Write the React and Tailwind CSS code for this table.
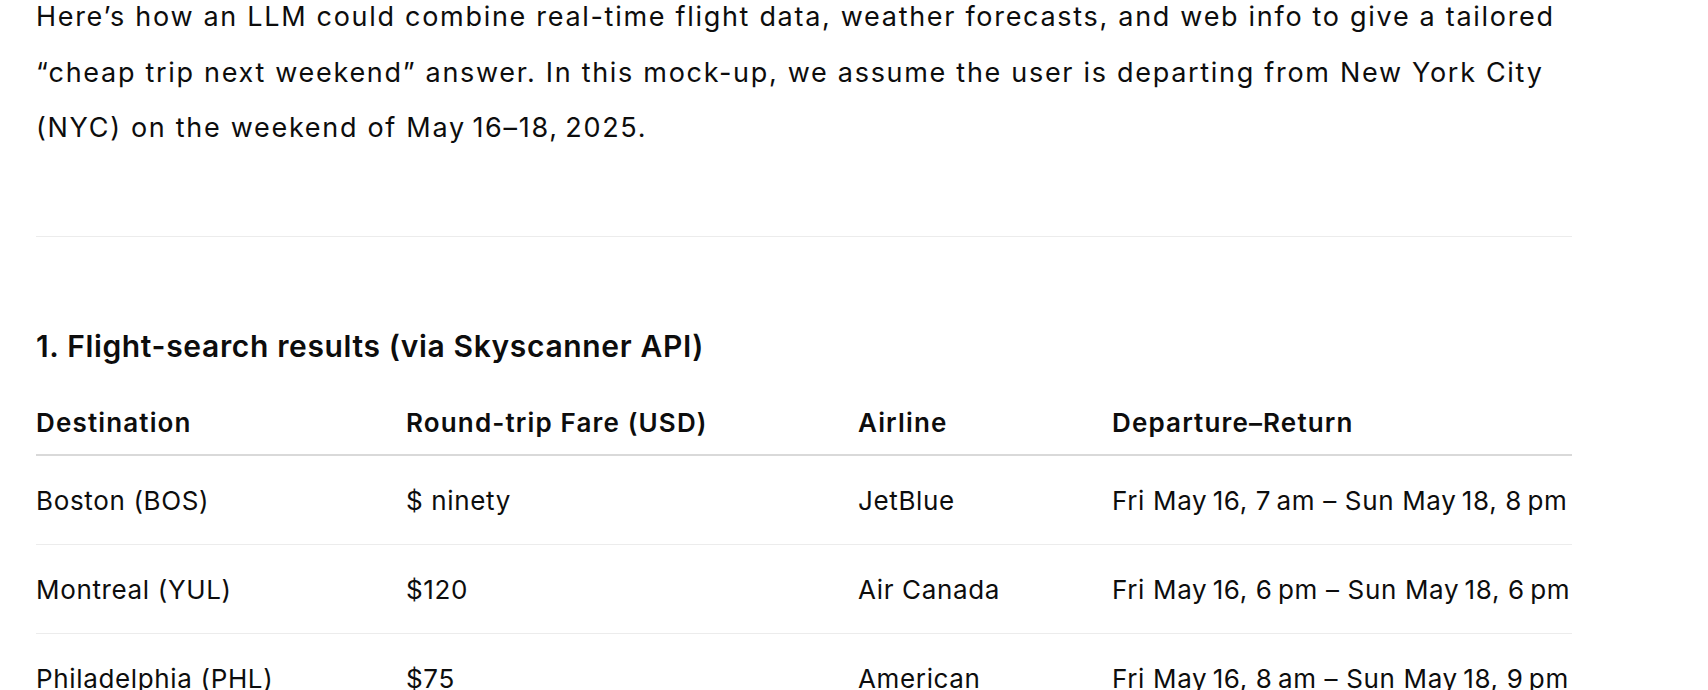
import React from 'react';

const flights = [
  { dest: 'Boston (BOS)', fare: '$ ninety', airline: 'JetBlue', dates: 'Fri May\u202F16, 7\u202Fam – Sun May\u202F18, 8\u202Fpm' },
  { dest: 'Montreal (YUL)', fare: '$120', airline: 'Air Canada', dates: 'Fri May\u202F16, 6\u202Fpm – Sun May\u202F18, 6\u202Fpm' },
  { dest: 'Philadelphia (PHL)', fare: '$75', airline: 'American', dates: 'Fri May\u202F16, 8\u202Fam – Sun May\u202F18, 9\u202Fpm' },
];

function App() {
  return (
    <div className="min-h-screen bg-white overflow-hidden font-['Inter','Noto_Sans',sans-serif] text-[#0d0d0d]">
      <div className="w-[1536px] ml-[36px]">
        {/* intro */}
        <p className="-mt-[11px] text-[27px] leading-[55.5px] tracking-[1.7px]">
          Here’s how an LLM could combine real-time flight data, weather forecasts, and web info to give a tailored
          “cheap trip next weekend” answer. In this mock-up, we assume the user is departing from New York City
          (NYC) on the weekend of May{'\u202F'}16–18,{'\u202F'}2025.
        </p>

        <hr className="mt-[80px] border-0 border-t border-[#ececec]" />

        {/* flights */}
        <h3 className="mt-[89px] text-[30px] leading-[40px] font-semibold tracking-[0.65px]">
          1. Flight-search results (via Skyscanner API)
        </h3>

        <table className="mt-[25px] w-full border-collapse text-left text-[26px] leading-[40px] tracking-[0.65px]">
          <colgroup>
            <col className="w-[370px]" />
            <col className="w-[452px]" />
            <col className="w-[254px]" />
            <col />
          </colgroup>
          <thead>
            <tr className="border-b-2 border-[#d9d9d9] tracking-[1.15px]">
              <th className="pt-[12px] pb-[11px] font-semibold">Destination</th>
              <th className="pt-[12px] pb-[11px] font-semibold">Round-trip Fare (USD)</th>
              <th className="pt-[12px] pb-[11px] font-semibold">Airline</th>
              <th className="pt-[12px] pb-[11px] font-semibold">Departure–Return</th>
            </tr>
          </thead>
          <tbody>
            {flights.map((f) => (
              <tr key={f.dest} className="border-b border-[#ececec]">
                <td className="pt-[25px] pb-[23px] whitespace-nowrap">{f.dest}</td>
                <td className="pt-[25px] pb-[23px] whitespace-nowrap">{f.fare}</td>
                <td className="pt-[25px] pb-[23px] whitespace-nowrap">{f.airline}</td>
                <td className="pt-[25px] pb-[23px] whitespace-nowrap">{f.dates}</td>
              </tr>
            ))}
          </tbody>
        </table>
      </div>
    </div>
  );
}

export default App;
